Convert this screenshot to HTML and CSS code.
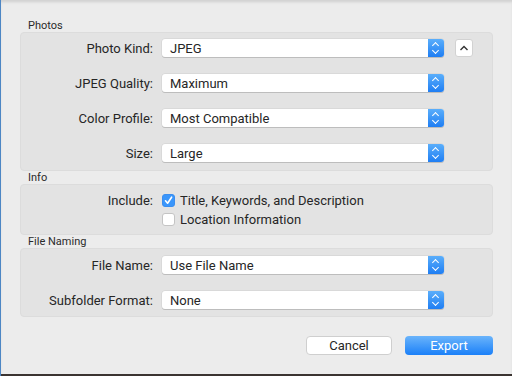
FILE: index.html
```html
<!DOCTYPE html>
<html lang="en">

<head>
    <meta charset="UTF-8">
    <meta name="viewport" content="width=device-width, initial-scale=1.0">
    <title>Export Photos</title>

    <link rel="stylesheet" href="styles.css">
</head>

<body>
    <div class="desk">
        <div class="sheet">
            <div class="group-title">Photos</div>
            <div class="group">
                <div class="row">
                    <label class="label">Photo Kind:</label>
                    <div class="popup"><span>JPEG</span><span class="stepper"></span></div>
                    <button class="disclose">
                        <svg width="10" height="6" viewBox="0 0 10 6"><path d="M1.5 5 L5 1.5 L8.5 5" fill="none" stroke="#333" stroke-width="1.4"/></svg>
                    </button>
                </div>
                <div class="row">
                    <label class="label">JPEG Quality:</label>
                    <div class="popup"><span>Maximum</span><span class="stepper"></span></div>
                </div>
                <div class="row">
                    <label class="label">Color Profile:</label>
                    <div class="popup"><span>Most Compatible</span><span class="stepper"></span></div>
                </div>
                <div class="row">
                    <label class="label">Size:</label>
                    <div class="popup"><span>Large</span><span class="stepper"></span></div>
                </div>
            </div>

            <div class="group-title">Info</div>
            <div class="group group-info">
                <div class="check-row">
                    <label class="label">Include:</label>
                    <span class="check checked">
                        <svg width="11" height="11" viewBox="0 0 11 11"><path d="M2.5 5.8 L4.6 8.2 L8.6 2.2" fill="none" stroke="#fff" stroke-width="1.6" stroke-linecap="round" stroke-linejoin="round"/></svg>
                    </span>
                    <span class="check-text">Title, Keywords, and Description</span>
                </div>
                <div class="check-row">
                    <span class="label"></span>
                    <span class="check"></span>
                    <span class="check-text">Location Information</span>
                </div>
            </div>

            <div class="group-title">File Naming</div>
            <div class="group group-naming">
                <div class="row">
                    <label class="label">File Name:</label>
                    <div class="popup"><span>Use File Name</span><span class="stepper"></span></div>
                </div>
                <div class="row">
                    <label class="label">Subfolder Format:</label>
                    <div class="popup"><span>None</span><span class="stepper"></span></div>
                </div>
            </div>

            <div class="actions">
                <button class="btn">Cancel</button>
                <button class="btn btn-primary">Export</button>
            </div>
        </div>
    </div>
</body>

</html>
```

FILE: styles.css
```css
body {
    margin: 0;
    font-family: 'Roboto', 'Liberation Sans', sans-serif;
    font-size: 13px;
    color: #262626;
    background-color: #3b3431;
}

.desk {
    height: 376px;
    border-left: 1px solid #4d86c4;
    box-sizing: border-box;
}

.sheet {
    height: 374px;
    box-sizing: border-box;
    background-color: #ececec;
    padding: 19px 19px 0 19px;
    box-shadow: inset 0 3px 3px -1px rgba(0, 0, 0, 0.12);
}

.group-title {
    font-size: 11px;
    line-height: 13px;
    padding-left: 8px;
    color: #2a2a2a;
}

.group {
    background-color: #e3e3e3;
    border: 1px solid #dcdcdc;
    border-radius: 4px;
    padding: 6px 0 8px 0;
    display: flex;
    flex-direction: column;
    gap: 17px;
}

.group-info {
    padding: 7px 0 6px 0;
    gap: 2px;
}

.group-naming {
    padding: 7px 0 7px 0;
}

.row,
.check-row {
    display: flex;
    align-items: center;
}

.label {
    width: 132px;
    margin-right: 9px;
    text-align: right;
    flex-shrink: 0;
}

.popup {
    width: 282px;
    height: 18px;
    background-color: #fff;
    border-radius: 3px;
    box-shadow: 0 1px 0 #bdbdbd, 0 0 0 0.5px #d0d0d0;
    display: flex;
    align-items: center;
    justify-content: space-between;
    padding-left: 8px;
    box-sizing: border-box;
    overflow: hidden;
}

.stepper {
    width: 16px;
    height: 18px;
    background: linear-gradient(#5aaefb, #1f7ef3);
    position: relative;
}

.stepper::before,
.stepper::after {
    content: "";
    position: absolute;
    left: 5px;
    width: 4px;
    height: 4px;
    border-left: 1.3px solid #fff;
    border-top: 1.3px solid #fff;
}

.stepper::before {
    top: 4px;
    transform: rotate(45deg);
}

.stepper::after {
    top: 9px;
    transform: rotate(225deg);
}

.disclose {
    width: 18px;
    height: 18px;
    margin-left: 11px;
    padding: 0;
    border: 1px solid #d2d2d2;
    border-radius: 3px;
    background-color: #fff;
    display: flex;
    align-items: center;
    justify-content: center;
}

.check-row {
    height: 17px;
}

.check {
    width: 13px;
    height: 13px;
    box-sizing: border-box;
    border: 1px solid #c4c4c4;
    border-radius: 3px;
    background-color: #fff;
    display: flex;
    align-items: center;
    justify-content: center;
    margin-right: 5px;
}

.check.checked {
    background-color: #3a96fb;
    border-color: #3a8ef0;
}

.actions {
    display: flex;
    justify-content: flex-end;
    gap: 13px;
    margin-top: 19px;
}

.btn {
    width: 86px;
    height: 19px;
    padding: 0;
    font-family: inherit;
    font-size: 13px;
    color: #262626;
    background-color: #fff;
    border: 1px solid #cfcfcf;
    border-radius: 4px;
}

.btn-primary {
    width: 88px;
    color: #fff;
    border: none;
    background: linear-gradient(#6ab4fb, #1b80f8);
}
```
